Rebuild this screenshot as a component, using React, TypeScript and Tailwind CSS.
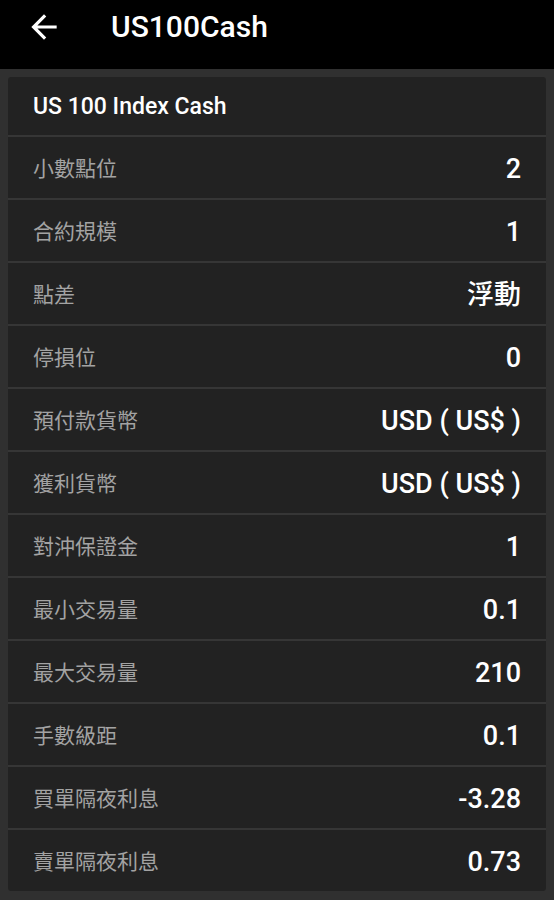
import React from "react";

const rows: [string, string][] = [
  ["小數點位", "2"],
  ["合約規模", "1"],
  ["點差", "浮動"],
  ["停損位", "0"],
  ["預付款貨幣", "USD ( US$ )"],
  ["獲利貨幣", "USD ( US$ )"],
  ["對沖保證金", "1"],
  ["最小交易量", "0.1"],
  ["最大交易量", "210"],
  ["手數級距", "0.1"],
  ["買單隔夜利息", "-3.28"],
  ["賣單隔夜利息", "0.73"],
];

export default function App() {
  return (
    <div
      className="min-h-[900px] bg-[#303030]"
      style={{ fontFamily: 'Roboto, "Noto Sans CJK TC", sans-serif' }}
    >
      {/* Toolbar */}
      <header className="flex h-[69px] items-start bg-black pt-[8px]">
        <svg viewBox="0 0 24 24" className="ml-[25px] h-[38px] w-[38px] fill-white">
          <path d="M20 11H7.83l5.59-5.59L12 4l-8 8 8 8 1.41-1.41L7.83 13H20v-2z" />
        </svg>
        <span className="ml-[48px] text-[30px] leading-[38px] font-medium text-white">
          US100Cash
        </span>
      </header>

      {/* Card */}
      <div className="px-2 pt-2">
        <div className="flex flex-col gap-[2px] overflow-hidden rounded-[3px] bg-[#363636]">
          <div className="flex h-[58px] items-center bg-[#222222] px-[25px] pt-[2px] text-[23px] font-medium text-white">
            US 100 Index Cash
          </div>
          {rows.map(([label, value]) => (
            <div
              key={label}
              className="flex h-[61px] items-center justify-between bg-[#222222] px-[25px] pt-[4px]"
            >
              <span className="text-[21px] text-[#a3a3a3]">{label}</span>
              <span className="text-[27px] font-medium text-white">
                {value}
              </span>
            </div>
          ))}
        </div>
      </div>
    </div>
  );
}
